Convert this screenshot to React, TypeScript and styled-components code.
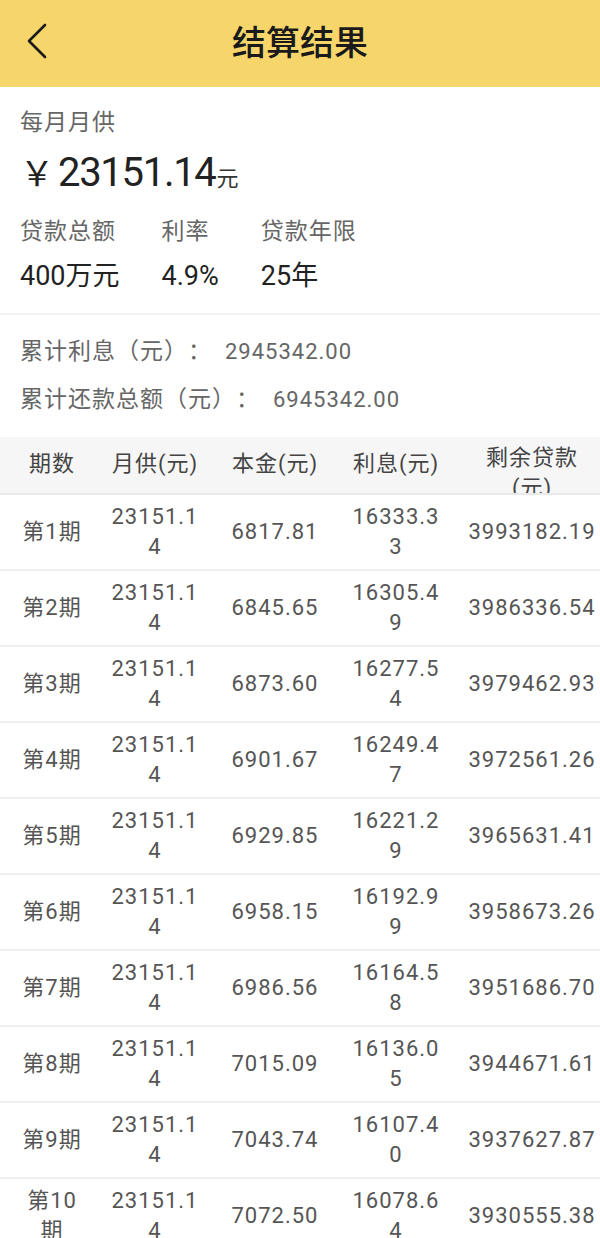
import React from "react";
import styled, { createGlobalStyle } from "styled-components";

const GlobalStyle = createGlobalStyle`
  html, body { margin: 0; padding: 0; background: #ffffff; }
  body { font-family: Roboto, "Noto Sans CJK SC", sans-serif; text-spacing-trim: space-all; }
  * { box-sizing: border-box; }
`;

type Col = { w: number; pad: number };
const COLS: Col[] = [
  { w: 104, pad: 19 },
  { w: 102, pad: 4 },
  { w: 138, pad: 10 },
  { w: 104, pad: 5 },
  { w: 168, pad: 19 },
];
const gridCols = COLS.map((c) => `${c.w}px`).join(" ");
const gridWidth = COLS.reduce((s, c) => s + c.w, 0);

const Page = styled.div`
  height: 100vh;
  display: flex;
  flex-direction: column;
  overflow: hidden;
  background: #ffffff;
  font-family: Roboto, "Noto Sans CJK SC", sans-serif;
  text-spacing-trim: space-all;
`;

const NavBar = styled.header`
  flex: none;
  height: 87px;
  background: #f6d66b;
  display: grid;
  grid-template-columns: 80px 1fr 80px;
  align-items: center;
  padding-bottom: 6px;
`;

const BackButton = styled.button`
  border: 0;
  background: transparent;
  padding: 0 0 0 26px;
  display: flex;
  align-items: center;
  cursor: pointer;
`;

const Title = styled.h1`
  margin: 0;
  text-align: center;
  font-family: "Noto Sans CJK SC", sans-serif;
  font-size: 34px;
  font-weight: 500;
  line-height: 1;
  color: #1a1a1a;
`;

const Summary = styled.section`
  flex: none;
  padding: 19px 20px 17px;
  border-bottom: 2px solid #f3f3f3;
`;

const Label = styled.div`
  font-size: 23px;
  letter-spacing: 1px;
  line-height: 34px;
  color: #666666;
`;

const Amount = styled.div`
  margin-top: 4px;
  height: 56px;
  display: flex;
  align-items: baseline;
  line-height: 56px;
  color: #222222;
`;

const Yen = styled.span`
  font-family: "Noto Sans CJK SC", sans-serif;
  font-size: 34px;
  width: 38px;
  text-align: left;
`;

const BigNumber = styled.span`
  font-size: 40px;
  letter-spacing: -1.3px;
`;

const Unit = styled.span`
  font-size: 22px;
  color: #333333;
  margin-left: 1px;
`;

const StatRow = styled.div`
  margin-top: 15px;
  display: flex;
  gap: 42px;
`;

const StatItem = styled.div`
  display: flex;
  flex-direction: column;
  gap: 7px;
`;

const StatValue = styled.div`
  font-size: 27px;
  line-height: 40px;
  color: #222222;
`;

const Totals = styled.section`
  flex: none;
  padding: 13px 20px;
`;

const TotalRow = styled.div`
  display: flex;
  align-items: baseline;
  line-height: 48px;
  color: #666666;
`;

const TotalLabel = styled.span`
  font-size: 23px;
  letter-spacing: 1px;
`;

const TotalValue = styled.span`
  margin-left: 13px;
  font-size: 22px;
  letter-spacing: 1px;
`;

const TableArea = styled.div`
  flex: 1;
  overflow: hidden;
`;

const HeaderRow = styled.div`
  display: grid;
  grid-template-columns: ${gridCols};
  grid-template-rows: 56px;
  width: ${gridWidth}px;
  height: 58px;
  background: #f6f6f6;
  border-bottom: 2px solid #eaeaea;
  overflow: hidden;
  color: #444444;
`;

const BodyRow = styled.div`
  display: grid;
  grid-template-columns: ${gridCols};
  grid-template-rows: 74px;
  width: ${gridWidth}px;
  height: 76px;
  border-bottom: 2px solid #efefef;
  color: #555555;
`;

const Cell = styled.div<{ $pad: number }>`
  display: flex;
  align-items: safe center;
  justify-content: center;
  text-align: center;
  padding: 0 ${(p) => p.$pad}px;
  font-size: 22px;
  letter-spacing: 1px;
  line-height: 30px;
  word-break: break-all;
  min-width: 0;
  min-height: 0;
`;

const HeaderCell = styled(Cell)`
  padding-top: 6px;
  padding-bottom: 8px;
`;

const rows: string[][] = [
  ["23151.14", "6817.81", "16333.33", "3993182.19"],
  ["23151.14", "6845.65", "16305.49", "3986336.54"],
  ["23151.14", "6873.60", "16277.54", "3979462.93"],
  ["23151.14", "6901.67", "16249.47", "3972561.26"],
  ["23151.14", "6929.85", "16221.29", "3965631.41"],
  ["23151.14", "6958.15", "16192.99", "3958673.26"],
  ["23151.14", "6986.56", "16164.58", "3951686.70"],
  ["23151.14", "7015.09", "16136.05", "3944671.61"],
  ["23151.14", "7043.74", "16107.40", "3937627.87"],
  ["23151.14", "7072.50", "16078.64", "3930555.38"],
  ["23151.14", "7101.38", "16049.76", "3923454.00"],
];

const headers = ["期数", "月供(元)", "本金(元)", "利息(元)", "剩余贷款(元)"];

const stats = [
  { label: "贷款总额", value: "400万元" },
  { label: "利率", value: "4.9%" },
  { label: "贷款年限", value: "25年" },
];

export default function App() {
  return (
    <Page>
      <GlobalStyle />
      <NavBar>
        <BackButton aria-label="返回">
          <svg width="22" height="36" viewBox="0 0 22 36" fill="none">
            <polyline
              points="19,2 3,18 19,34"
              stroke="#1a1a1a"
              strokeWidth="2.6"
              strokeLinecap="round"
              strokeLinejoin="round"
            />
          </svg>
        </BackButton>
        <Title>结算结果</Title>
        <span />
      </NavBar>

      <Summary>
        <Label>每月月供</Label>
        <Amount>
          <Yen>￥</Yen>
          <BigNumber>23151.14</BigNumber>
          <Unit>元</Unit>
        </Amount>
        <StatRow>
          {stats.map((s) => (
            <StatItem key={s.label}>
              <Label>{s.label}</Label>
              <StatValue>{s.value}</StatValue>
            </StatItem>
          ))}
        </StatRow>
      </Summary>

      <Totals>
        <TotalRow>
          <TotalLabel>累计利息（元）：</TotalLabel>
          <TotalValue>2945342.00</TotalValue>
        </TotalRow>
        <TotalRow>
          <TotalLabel>累计还款总额（元）：</TotalLabel>
          <TotalValue>6945342.00</TotalValue>
        </TotalRow>
      </Totals>

      <TableArea>
        <HeaderRow>
          {headers.map((h, i) => (
            <HeaderCell key={h} $pad={COLS[i].pad}>
              {h}
            </HeaderCell>
          ))}
        </HeaderRow>
        {rows.map((r, idx) => (
          <BodyRow key={idx}>
            <Cell $pad={COLS[0].pad}>{`第${idx + 1}期`}</Cell>
            {r.map((v, i) => (
              <Cell key={i} $pad={COLS[i + 1].pad}>
                {v}
              </Cell>
            ))}
          </BodyRow>
        ))}
      </TableArea>
    </Page>
  );
}
